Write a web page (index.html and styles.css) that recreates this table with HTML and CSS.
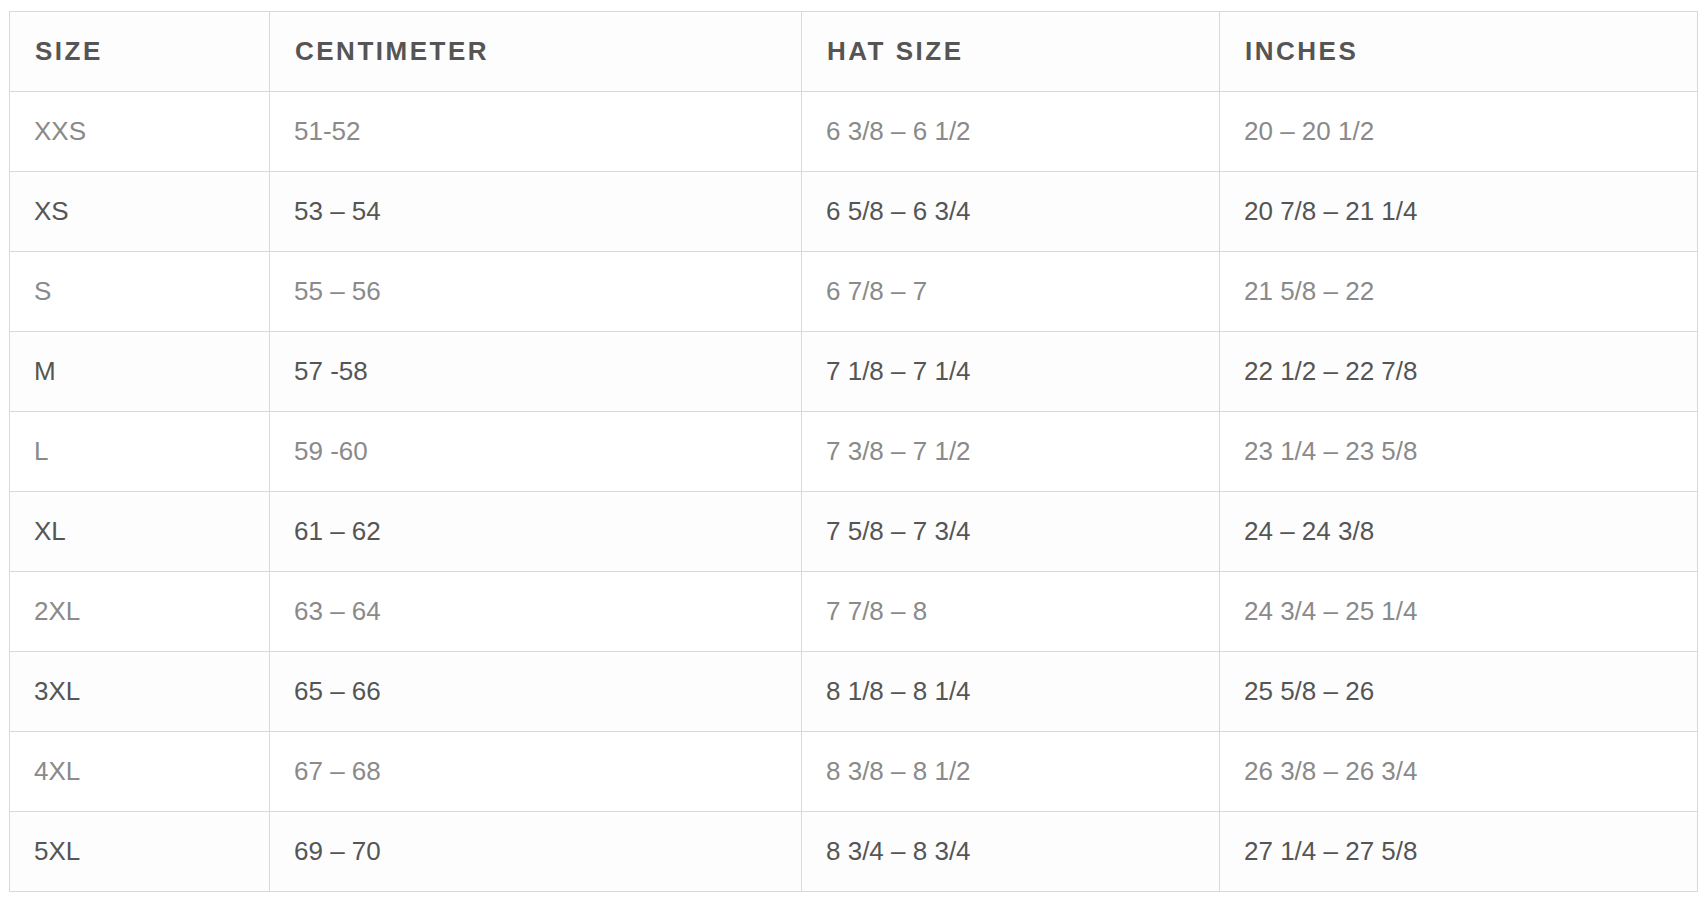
FILE: index.html
```html
<!DOCTYPE html>
<html lang="en">
<head>
<meta charset="utf-8">
<title>Size Chart</title>
<link rel="stylesheet" href="styles.css">
</head>
<body>
<div class="page">
  <div class="chart">
    <div class="cell head">SIZE</div>
    <div class="cell head">CENTIMETER</div>
    <div class="cell head">HAT SIZE</div>
    <div class="cell head">INCHES</div>

    <div class="cell light">XXS</div>
    <div class="cell light">51-52</div>
    <div class="cell light">6 3/8 – 6 1/2</div>
    <div class="cell light">20 – 20 1/2</div>

    <div class="cell dark">XS</div>
    <div class="cell dark">53 – 54</div>
    <div class="cell dark">6 5/8 – 6 3/4</div>
    <div class="cell dark">20 7/8 – 21 1/4</div>

    <div class="cell light">S</div>
    <div class="cell light">55 – 56</div>
    <div class="cell light">6 7/8 – 7</div>
    <div class="cell light">21 5/8 – 22</div>

    <div class="cell dark">M</div>
    <div class="cell dark">57 -58</div>
    <div class="cell dark">7 1/8 – 7 1/4</div>
    <div class="cell dark">22 1/2 – 22 7/8</div>

    <div class="cell light">L</div>
    <div class="cell light">59 -60</div>
    <div class="cell light">7 3/8 – 7 1/2</div>
    <div class="cell light">23 1/4 – 23 5/8</div>

    <div class="cell dark">XL</div>
    <div class="cell dark">61 – 62</div>
    <div class="cell dark">7 5/8 – 7 3/4</div>
    <div class="cell dark">24 – 24 3/8</div>

    <div class="cell light">2XL</div>
    <div class="cell light">63 – 64</div>
    <div class="cell light">7 7/8 – 8</div>
    <div class="cell light">24 3/4 – 25 1/4</div>

    <div class="cell dark">3XL</div>
    <div class="cell dark">65 – 66</div>
    <div class="cell dark">8 1/8 – 8 1/4</div>
    <div class="cell dark">25 5/8 – 26</div>

    <div class="cell light">4XL</div>
    <div class="cell light">67 – 68</div>
    <div class="cell light">8 3/8 – 8 1/2</div>
    <div class="cell light">26 3/8 – 26 3/4</div>

    <div class="cell dark">5XL</div>
    <div class="cell dark">69 – 70</div>
    <div class="cell dark">8 3/4 – 8 3/4</div>
    <div class="cell dark">27 1/4 – 27 5/8</div>
  </div>
</div>
</body>
</html>
```

FILE: styles.css
```css
html, body {
  margin: 0;
  padding: 0;
  background: #ffffff;
}

.page {
  padding: 11px 0 0 9px;
  font-family: "Liberation Sans", Arial, sans-serif;
}

.chart {
  display: grid;
  grid-template-columns: 260px 532px 418px 478px;
  grid-auto-rows: 80px;
  width: max-content;
  border-top: 1px solid #d9d9d9;
  border-left: 1px solid #d9d9d9;
}

.cell {
  box-sizing: border-box;
  display: flex;
  align-items: center;
  padding-left: 24px;
  border-right: 1px solid #d9d9d9;
  border-bottom: 1px solid #d9d9d9;
  font-size: 26px;
  white-space: nowrap;
}

.head {
  font-weight: bold;
  letter-spacing: 2.5px;
  color: #555555;
  padding-left: 25px;
  background: #fdfdfd;
}

.light {
  color: #8a8a8a;
}

.dark {
  color: #555555;
  background: #fdfdfd;
}
```
